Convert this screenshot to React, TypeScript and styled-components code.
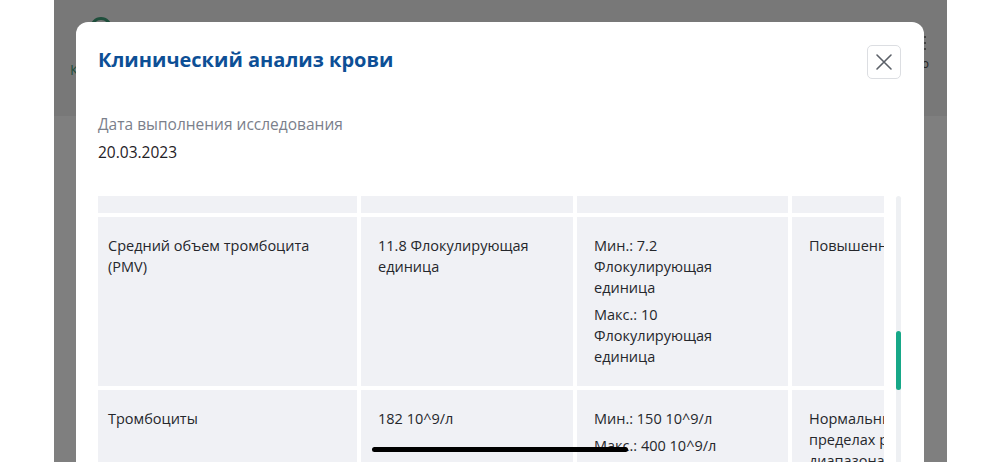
import React from 'react';
import styled, { createGlobalStyle } from 'styled-components';

const GlobalStyle = createGlobalStyle`
  html, body {
    margin: 0;
    padding: 0;
    background: #ffffff;
    font-family: 'Open Sans', 'Noto Sans', sans-serif;
    overflow: hidden;
  }
`;

type Row = {
  name: string;
  value: string;
  ranges: string[];
  status: string;
};

const rows: Row[] = [
  {
    name: 'Средний объем тромбоцита (PMV)',
    value: '11.8 Флокулирующая единица',
    ranges: ['Мин.: 7.2 Флокулирующая единица', 'Макс.: 10 Флокулирующая единица'],
    status: 'Повышенный'
  },
  {
    name: 'Тромбоциты',
    value: '182 10^9/л',
    ranges: ['Мин.: 150 10^9/л', 'Макс.: 400 10^9/л'],
    status: 'Нормальный (в\nпределах референсного\nдиапазона)'
  }
];

export default function App() {
  return (
    <>
      <GlobalStyle />
      <Screen>
        <Backdrop>
          <PageHeader>
            <Logo />
            <LogoText>К</LogoText>
            <Kebab>
              <Dot />
              <Dot />
              <Dot />
              <KebabLabel>о</KebabLabel>
            </Kebab>
          </PageHeader>
          <PageMain />
        </Backdrop>

        <Modal>
          <ModalHead>
            <Title>Клинический анализ крови</Title>
            <CloseButton aria-label="Закрыть">
              <svg width="18" height="18" viewBox="0 0 18 18" fill="none">
                <path d="M2 2L16 16M16 2L2 16" stroke="#5b6068" strokeWidth="1.6" strokeLinecap="round" />
              </svg>
            </CloseButton>
          </ModalHead>

          <Field>
            <FieldLabel>Дата выполнения исследования</FieldLabel>
            <FieldValue>20.03.2023</FieldValue>
          </Field>

          <TableArea>
            <Viewport>
              <Grid>
                <Cell $cut $first />
                <Cell $cut />
                <Cell $cut />
                <Cell $cut />
                {rows.map(r => (
                  <React.Fragment key={r.name}>
                    <Cell $first>{r.name}</Cell>
                    <Cell>{r.value}</Cell>
                    <Cell>
                      {r.ranges.map(x => (
                        <Range key={x}>{x}</Range>
                      ))}
                    </Cell>
                    <Cell $nowrap>{r.status}</Cell>
                  </React.Fragment>
                ))}
              </Grid>
            </Viewport>
            <ScrollTrack>
              <ScrollThumb />
            </ScrollTrack>
          </TableArea>
        </Modal>

        <HomeIndicator />
      </Screen>
    </>
  );
}

const Screen = styled.div`
  position: relative;
  width: 1000px;
  height: 462px;
  overflow: hidden;
  background: #ffffff;
`;

const Backdrop = styled.div`
  margin: 0 53px 0 54px;
  height: 100%;
  display: flex;
  flex-direction: column;
  background: #808080;
`;

const PageHeader = styled.div`
  position: relative;
  height: 116px;
  background: #787878;
`;

const PageMain = styled.div`
  flex: 1;
  background: #7f7f7f;
`;

const Logo = styled.div`
  position: absolute;
  left: 36px;
  top: 17px;
  width: 22px;
  height: 22px;
  border-radius: 50%;
  border: 3px solid #1f4f3c;
  box-sizing: border-box;
`;

const LogoText = styled.span`
  position: absolute;
  left: 16px;
  top: 60px;
  font-size: 14px;
  color: #1f4f3c;
`;

const Kebab = styled.div`
  position: absolute;
  right: 18px;
  top: 36px;
  display: flex;
  flex-direction: column;
  align-items: center;
  gap: 4px;
`;

const Dot = styled.span`
  width: 2px;
  height: 2px;
  border-radius: 50%;
  background: #333;
`;

const KebabLabel = styled.span`
  font-size: 12px;
  line-height: 12px;
  color: #222;
  margin-top: 4px;
`;

const Modal = styled.div`
  position: absolute;
  left: 76px;
  top: 22px;
  width: 848px;
  bottom: -40px;
  background: #ffffff;
  border-radius: 12px 12px 0 0;
  padding: 23px 23px 0 22px;
  box-sizing: border-box;
  display: flex;
  flex-direction: column;
`;

const ModalHead = styled.div`
  display: flex;
  justify-content: space-between;
  align-items: flex-start;
`;

const Title = styled.h2`
  margin: 1px 0 0;
  font-size: 20px;
  line-height: 28px;
  font-weight: 700;
  color: #0d4f96;
`;

const CloseButton = styled.button`
  width: 34px;
  height: 34px;
  border: 1px solid #dcdee2;
  border-radius: 5px;
  background: #ffffff;
  display: flex;
  align-items: center;
  justify-content: center;
  padding: 0;
  cursor: pointer;
`;

const Field = styled.div`
  margin-top: 34px;
  display: flex;
  flex-direction: column;
  gap: 6px;
`;

const FieldLabel = styled.span`
  font-size: 15.5px;
  line-height: 22px;
  color: #7b808b;
`;

const FieldValue = styled.span`
  font-size: 15.5px;
  line-height: 22px;
  color: #1f2126;
`;

const TableArea = styled.div`
  margin-top: 33px;
  flex: 1;
  display: flex;
  min-height: 0;
`;

const Viewport = styled.div`
  width: 789px;
  overflow: hidden;
`;

const Grid = styled.div`
  display: grid;
  grid-template-columns: 259px 212px 211px 211px;
  gap: 4px;
`;

const Cell = styled.div<{ $cut?: boolean; $first?: boolean; $nowrap?: boolean }>`
  background: #f0f1f5;
  color: #25272c;
  font-size: 14.5px;
  line-height: 21px;
  padding: ${p => (p.$cut ? '0' : p.$first ? '18px 17px 19px 10px' : '18px 17px 19px')};
  height: ${p => (p.$cut ? '17px' : 'auto')};
  white-space: ${p => (p.$nowrap ? 'pre-line' : 'normal')};
  box-sizing: border-box;
  overflow: hidden;
`;

const Range = styled.div`
  & + & {
    margin-top: 6px;
  }
`;

const ScrollTrack = styled.div`
  margin-left: 12px;
  width: 5px;
  background: #eef0f3;
  border-radius: 3px;
  position: relative;
`;

const ScrollThumb = styled.div`
  position: absolute;
  left: 0;
  top: 135px;
  width: 5px;
  height: 59px;
  border-radius: 3px;
  background: #17a888;
`;

const HomeIndicator = styled.div`
  position: absolute;
  left: 372px;
  bottom: 10px;
  width: 256px;
  height: 5px;
  border-radius: 3px;
  background: #000000;
`;
